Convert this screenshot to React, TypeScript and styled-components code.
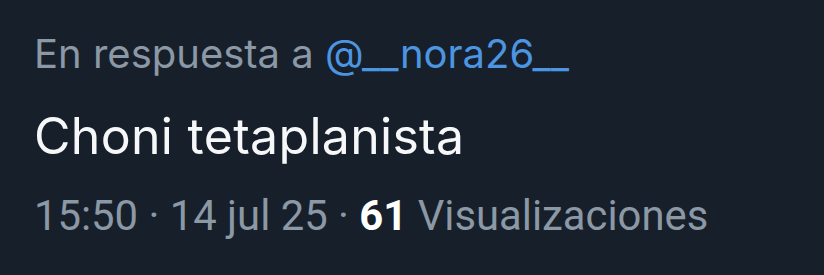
import styled, { createGlobalStyle } from 'styled-components'

const GlobalStyle = createGlobalStyle`
  html, body {
    margin: 0;
    padding: 0;
    background: #171f2a;
  }
`

// contenedor del tweet
const TweetRoot = styled.div`
  width: 824px;
  height: 275px;
  box-sizing: border-box;
  padding: 27px 0 0 34px;
  background: #171f2a;
  font-family: Inter, "Noto Sans", sans-serif;
  display: flex;
  flex-direction: column;
`

// "En respuesta a"
const ReplyLine = styled.div`
  height: 54px;
  font-size: 40px;
  line-height: 54px;
  color: #8b98a5;
  white-space: nowrap;
`

const Mention = styled.span`
  color: #4c95e0;
`

// texto principal
const Body = styled.div`
  margin-top: 23px;
  height: 64px;
  font-size: 50px;
  line-height: 64px;
  color: #f5f7f9;
  letter-spacing: 0.3px;
  white-space: nowrap;
`

// hora, fecha y visualizaciones
const Meta = styled.div`
  margin-top: 20px;
  height: 56px;
  font-family: Roboto, "Liberation Sans", sans-serif;
  font-size: 41.8px;
  line-height: 56px;
  color: #8b98a5;
  white-space: nowrap;
`

const Count = styled.span`
  color: #ffffff;
  font-weight: 700;
`

const App = () => {
  return (
    <>
      <GlobalStyle />
      <TweetRoot>
        <ReplyLine>
          En respuesta a <Mention>@__nora26__</Mention>
        </ReplyLine>
        <Body>Choni tetaplanista</Body>
        <Meta>
          15:50 · 14 jul 25 · <Count>61</Count> Visualizaciones
        </Meta>
      </TweetRoot>
    </>
  )
}

export default App
